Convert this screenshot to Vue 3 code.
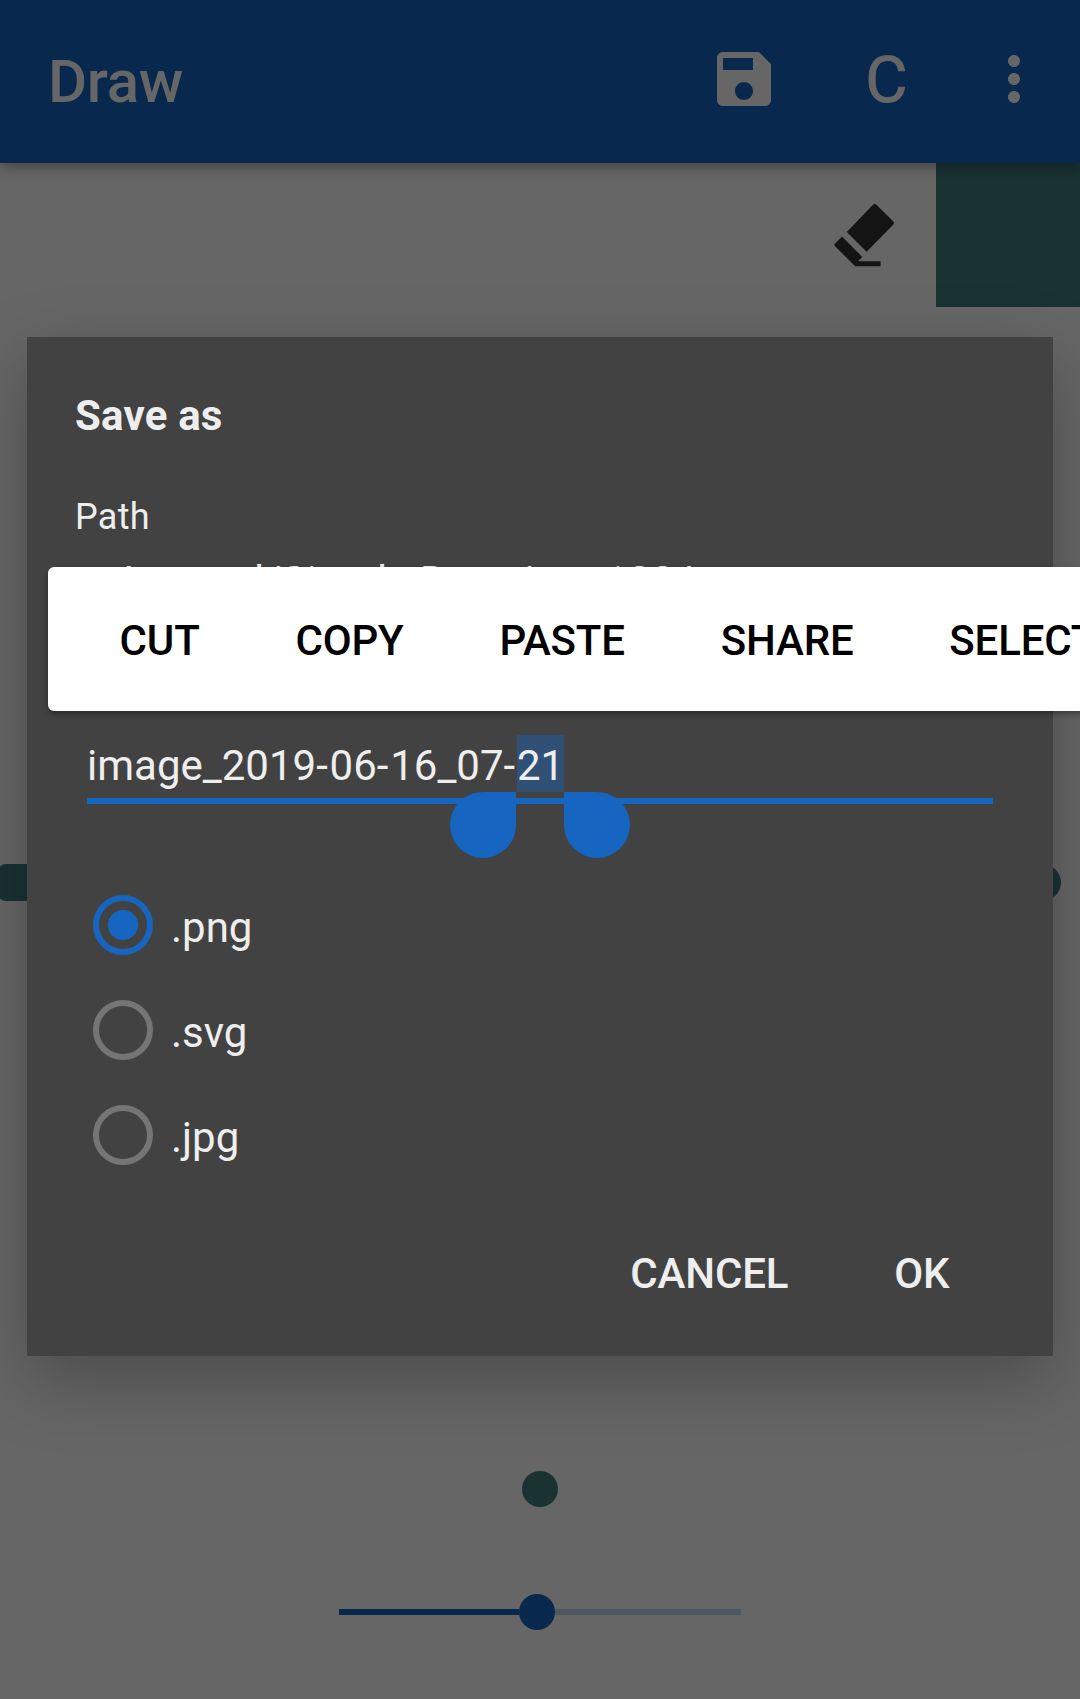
<script setup>
const actions = ['Cut', 'Copy', 'Paste', 'Share', 'Select all']
const formats = ['.png', '.svg', '.jpg']
const selected = '.png'
const nameParts = ['image_2019', '-', '06', '-', '16_07', '-']
</script>

<template>
  <div class="screen">
    <header class="bar">
      <h1 class="bar-title">Draw</h1>
      <svg class="bar-icon" viewBox="0 0 24 24">
        <path d="M17 3H5c-1.11 0-2 .9-2 2v14c0 1.1.89 2 2 2h14c1.1 0 2-.9 2-2V7l-4-4zM12 19c-1.66 0-3-1.34-3-3s1.34-3 3-3 3 1.34 3 3-1.34 3-3 3zm3-10H5V5h10v4z" />
      </svg>
      <span class="clear">C</span>
      <svg class="bar-icon" viewBox="0 0 24 24">
        <path d="M12 8c1.1 0 2-.9 2-2s-.9-2-2-2-2 .9-2 2 .9 2 2 2zm0 2c-1.1 0-2 .9-2 2s.9 2 2 2 2-.9 2-2-.9-2-2-2zm0 6c-1.1 0-2 .9-2 2s.9 2 2 2 2-.9 2-2-.9-2-2-2z" />
      </svg>
    </header>

    <div class="tools">
      <svg class="eraser" viewBox="0 0 60 60">
        <path d="M39 1.8q1.7-1.7 3.4 0L59.4 18.6q1.3 1.4 0 2.8L32.6 48.8 12.8 29z" />
        <path d="M8 33.5 28.3 54 24 58.3H46.6V63.2H21.2L.8 42.9q-.9-1.3 0-2.2z" />
      </svg>
      <div class="swatch"></div>
    </div>

    <div class="canvas">
      <div class="stroke"></div>
    </div>

    <div class="brush">
      <div class="dot"></div>
      <div class="slider">
        <div class="filled"></div>
        <div class="thumb"></div>
        <div class="rest"></div>
      </div>
    </div>

    <section class="dialog">
      <h2 class="dialog-title">Save as</h2>
      <div class="label">Path</div>
      <div class="path">Internal/Simple Draw/test123/</div>
      <div class="field">
        <span v-for="(p, i) in nameParts" :key="i" :class="{ dash: p === '-' }">{{ p }}</span><span class="picked">21</span>
        <i class="handle start"></i>
        <i class="handle end"></i>
      </div>
      <div class="formats">
        <div v-for="f in formats" :key="f" class="format">
          <span class="radio" :class="{ on: f === selected }"></span>
          <span class="format-name">{{ f }}</span>
        </div>
      </div>
      <div class="buttons">
        <span>CANCEL</span>
        <span>OK</span>
      </div>
    </section>

    <nav class="popup">
      <span v-for="a in actions" :key="a">{{ a }}</span>
    </nav>
  </div>
</template>

<style>
body {
  margin: 0;
  background: #666;
}
</style>

<style scoped>
.screen {
  position: relative;
  width: 1080px;
  height: 1699px;
  overflow: hidden;
  display: flex;
  flex-direction: column;
  background: #666;
  font-family: Roboto, sans-serif;
}
h1,
h2 {
  margin: 0;
}
.bar {
  flex: none;
  box-sizing: border-box;
  height: 163px;
  padding: 0 30px 0 48px;
  display: flex;
  align-items: center;
  background: #08284d;
  color: #666;
  box-shadow: 0 5px 12px rgba(0, 0, 0, 0.3);
  z-index: 1;
}
.bar-title {
  flex: 1;
  font-size: 60px;
  font-weight: 500;
  line-height: 70px;
  letter-spacing: -0.3px;
}
.bar-icon {
  width: 72px;
  height: 72px;
  margin-bottom: 5px;
  fill: #666;
}
.clear {
  box-sizing: border-box;
  width: 198px;
  padding-left: 15px;
  text-align: center;
  font-size: 65px;
  line-height: 80px;
  margin-bottom: 3px;
  -webkit-text-stroke: 0.9px #666;
}
.tools {
  flex: none;
  height: 144px;
  display: flex;
  justify-content: flex-end;
}
.eraser {
  width: 60px;
  height: 60px;
  margin: 40px 42.5px 0 0;
  overflow: visible;
  fill: #141414;
}
.swatch {
  width: 144px;
  background: #1a3232;
}
.canvas {
  flex: none;
  height: 1163px;
  box-sizing: border-box;
  padding-top: 557px;
}
.stroke {
  width: 1063px;
  height: 37px;
  margin-left: -2px;
  border-radius: 8px 19px 19px 8px;
  background: #1a3232;
}
.brush {
  flex: 1;
  display: flex;
  flex-direction: column;
  align-items: center;
}
.dot {
  width: 36.6px;
  height: 36.6px;
  margin-top: 0.6px;
  border-radius: 50%;
  background: #1a3232;
}
.slider {
  width: 402px;
  height: 36px;
  margin-top: 86.8px;
  display: flex;
  align-items: center;
}
.filled {
  width: 180px;
  height: 6px;
  background: #08284d;
}
.thumb {
  width: 36px;
  height: 36px;
  border-radius: 50%;
  background: #08284d;
}
.rest {
  flex: 1;
  height: 6px;
  background: #4d5864;
}
.dialog {
  position: absolute;
  left: 27px;
  top: 337px;
  width: 1026px;
  height: 1019px;
  box-sizing: border-box;
  padding: 51px 60px 0 48px;
  display: flex;
  flex-direction: column;
  background: #424242;
  color: #eee;
  font-size: 42px;
  box-shadow: 0 24px 66px rgba(0, 0, 0, 0.26);
  z-index: 2;
}
.dialog-title {
  font-size: 42px;
  font-weight: 700;
  line-height: 56px;
  letter-spacing: 0.2px;
}
.label {
  margin-top: 49px;
  font-size: 36px;
  line-height: 48px;
  letter-spacing: 0.3px;
}
.path {
  margin: 13px 0 0 48px;
  line-height: 56px;
}
.field {
  position: relative;
  height: 63px;
  margin: 125px 0 0 12px;
  line-height: 62px;
  border-bottom: 6px solid #1665c0;
  white-space: nowrap;
}
.dash {
  letter-spacing: 1.8px;
}
.picked {
  display: inline-block;
  height: 57px;
  vertical-align: top;
  background: #305075;
}
.handle {
  position: absolute;
  top: 57px;
  width: 66px;
  height: 66px;
  background: #1665c0;
}
.start {
  left: 363px;
  border-radius: 33px 0 33px 33px;
}
.end {
  left: 477px;
  border-radius: 0 33px 33px 33px;
}
.formats {
  margin-top: 68px;
}
.format {
  height: 105px;
  display: flex;
  align-items: center;
  padding-left: 18px;
}
.radio {
  box-sizing: border-box;
  width: 60px;
  height: 60px;
  border: 6px solid #757575;
  border-radius: 50%;
}
.radio.on {
  border-color: #1665c0;
  background: radial-gradient(circle, #1665c0 14.6px, transparent 15.4px);
}
.format-name {
  margin: 7px 0 0 18px;
  line-height: 56px;
}
.buttons {
  margin-top: 32px;
  height: 108px;
  display: flex;
  justify-content: flex-end;
  align-items: center;
  padding-right: 43.5px;
  gap: 106px;
  font-weight: 500;
  letter-spacing: -0.15px;
}
.popup {
  position: absolute;
  left: 48px;
  top: 567px;
  width: 1200px;
  height: 144px;
  box-sizing: border-box;
  padding-left: 71.6px;
  display: flex;
  align-items: center;
  gap: 95.9px;
  border-radius: 6px;
  background: #fff;
  color: #000;
  font-size: 42px;
  font-weight: 500;
  line-height: 56px;
  letter-spacing: -0.18px;
  text-transform: uppercase;
  white-space: nowrap;
  box-shadow: 0 3px 6px rgba(0, 0, 0, 0.35);
  z-index: 3;
}
.popup span {
  margin-top: 3px;
}
</style>
